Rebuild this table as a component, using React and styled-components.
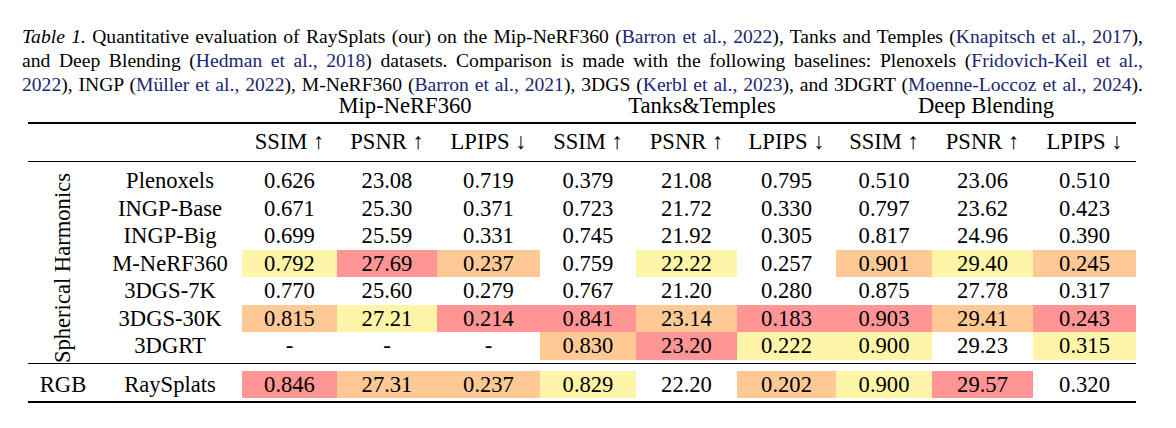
import React from "react";
import styled, { createGlobalStyle } from "styled-components";

const Global = createGlobalStyle`
  html, body { margin: 0; padding: 0; background: #fff; }
  body { font-family: "Liberation Serif", "Times New Roman", serif; color: #000; }
`;

const Page = styled.div`
  width: 1176px;
  height: 428px;
  overflow: hidden;
  background: #fff;
  padding-top: 25px;
  box-sizing: border-box;
`;

const Caption = styled.div`
  width: 1121px;
  margin-left: 22px;
  font-size: 19.6px;
  line-height: 24px;
`;

const CapLine = styled.div`
  text-align: justify;
  text-align-last: justify;
`;

const Cite = styled.span`
  color: #1a2675;
`;

const Label = styled.i`
  font-style: italic;
`;

const Table = styled.table`
  margin-left: 28px;
  margin-top: -6px;
  border-collapse: collapse;
  table-layout: fixed;
  width: 1108px;
  font-size: 22.6px;
  text-align: center;
`;

const GroupRow = styled.tr`
  height: 32px;
  td { padding: 0; vertical-align: top; line-height: 30px; white-space: nowrap; }
`;

const GroupCell = styled.td`
  && { padding-left: ${(p) => p.$shift || 0}px; }
`;

const HeadRow = styled.tr`
  border-top: 2px solid #000;
  border-bottom: 1.3px solid #000;
  height: 38px;
  td { padding: 0; line-height: 26px; white-space: nowrap; }
`;

const SpacerRow = styled.tr`
  height: ${(p) => p.$h}px;
  td { padding: 0; }
`;

const DataRow = styled.tr`
  height: 27.5px;
  td { padding: 0; line-height: 27.5px; white-space: nowrap; }
`;

const GroupSep = styled.tr`
  border-bottom: ${(p) => p.$w}px solid #000;
  height: ${(p) => p.$h}px;
  td { padding: 0; }
`;

const Cell = styled.td`
  background: ${(p) =>
    p.$c === "r" ? "#ff9595" : p.$c === "o" ? "#ffc995" : p.$c === "y" ? "#fff5a8" : "transparent"};
`;

const RotCell = styled.td`
  position: relative;
  padding: 0;
  vertical-align: bottom;
`;

const RotText = styled.div`
  position: absolute;
  left: 50%;
  bottom: -4px;
  transform: translateX(-50%) rotate(180deg);
  writing-mode: vertical-rl;
  white-space: nowrap;
  line-height: 24px;
`;

const widths = [70, 144, 95, 100, 103, 96, 101, 99, 96, 101, 103];

const rows = [
  ["Plenoxels", ["0.626", "23.08", "0.719", "0.379", "21.08", "0.795", "0.510", "23.06", "0.510"], ""],
  ["INGP-Base", ["0.671", "25.30", "0.371", "0.723", "21.72", "0.330", "0.797", "23.62", "0.423"], ""],
  ["INGP-Big", ["0.699", "25.59", "0.331", "0.745", "21.92", "0.305", "0.817", "24.96", "0.390"], ""],
  ["M-NeRF360", ["0.792", "27.69", "0.237", "0.759", "22.22", "0.257", "0.901", "29.40", "0.245"], "yro.y.oyo"],
  ["3DGS-7K", ["0.770", "25.60", "0.279", "0.767", "21.20", "0.280", "0.875", "27.78", "0.317"], "........."],
  ["3DGS-30K", ["0.815", "27.21", "0.214", "0.841", "23.14", "0.183", "0.903", "29.41", "0.243"], "oyrrorror"],
  ["3DGRT", ["-", "-", "-", "0.830", "23.20", "0.222", "0.900", "29.23", "0.315"], "...oryy.y"],
];

const rgbRow = ["RaySplats", ["0.846", "27.31", "0.237", "0.829", "22.20", "0.202", "0.900", "29.57", "0.320"], "rooy.oyr."];

const colorOf = (s, i) => {
  const c = (s || "")[i];
  return c && c !== "." ? c : "";
};

const metrics = ["SSIM ↑", "PSNR ↑", "LPIPS ↓"];

export default function App() {
  return (
    <Page>
      <Global />
      <Caption>
        <CapLine>
          <Label>Table 1.</Label> Quantitative evaluation of RaySplats (our) on the Mip-NeRF360 (<Cite>Barron et al., 2022</Cite>), Tanks and Temples (<Cite>Knapitsch et al., 2017</Cite>),
        </CapLine>
        <CapLine>
          and Deep Blending (<Cite>Hedman et al., 2018</Cite>) datasets. Comparison is made with the following baselines: Plenoxels (<Cite>Fridovich-Keil et al.,</Cite>
        </CapLine>
        <CapLine>
          <Cite>2022</Cite>), INGP (<Cite>Müller et al., 2022</Cite>), M-NeRF360 (<Cite>Barron et al., 2021</Cite>), 3DGS (<Cite>Kerbl et al., 2023</Cite>), and 3DGRT (<Cite>Moenne-Loccoz et al., 2024</Cite>).
        </CapLine>
      </Caption>
      <Table>
        <colgroup>
          {widths.map((w, i) => (
            <col key={i} style={{ width: w }} />
          ))}
        </colgroup>
        <tbody>
          <GroupRow>
            <td />
            <td />
            <GroupCell colSpan={3} $shift={28}>Mip-NeRF360</GroupCell>
            <GroupCell colSpan={3} $shift={28}>Tanks&amp;Temples</GroupCell>
            <GroupCell colSpan={3}>Deep Blending</GroupCell>
          </GroupRow>
          <HeadRow>
            <td />
            <td />
            {[0, 1, 2].flatMap((g) =>
              metrics.map((m, i) => <td key={`${g}-${i}`}>{m}</td>)
            )}
          </HeadRow>
          <SpacerRow $h={6}>
            <td colSpan={11} />
          </SpacerRow>
          {rows.map(([name, vals, colors], ri) => (
            <DataRow key={name}>
              {ri === 0 && (
                <RotCell rowSpan={7}>
                  <RotText>Spherical Harmonics</RotText>
                </RotCell>
              )}
              <td>{name}</td>
              {vals.map((v, i) => (
                <Cell key={i} $c={colorOf(colors, i)}>{v}</Cell>
              ))}
            </DataRow>
          ))}
          <GroupSep $w={1.3} $h={4}>
            <td colSpan={11} />
          </GroupSep>
          <SpacerRow $h={7}>
            <td colSpan={11} />
          </SpacerRow>
          <DataRow>
            <td>RGB</td>
            <td>{rgbRow[0]}</td>
            {rgbRow[1].map((v, i) => (
              <Cell key={i} $c={colorOf(rgbRow[2], i)}>{v}</Cell>
            ))}
          </DataRow>
          <GroupSep $w={2.4} $h={4}>
            <td colSpan={11} />
          </GroupSep>
        </tbody>
      </Table>
    </Page>
  );
}
